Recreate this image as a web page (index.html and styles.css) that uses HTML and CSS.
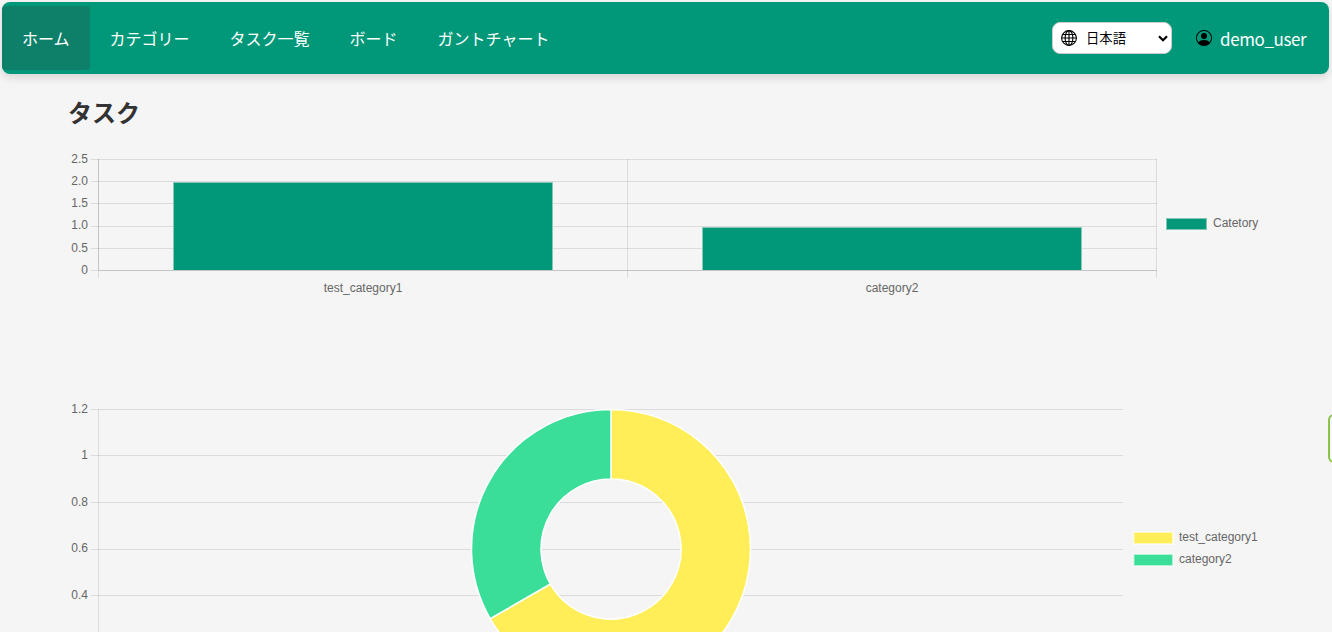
FILE: index.html
```html
<!DOCTYPE html>
<html lang="ja">
<head>
<meta charset="utf-8">
<title>タスク</title>
<link rel="stylesheet" href="styles.css">
</head>
<body>
<header class="navbar">
  <nav class="menu">
    <a class="menu-link active">ホーム</a>
    <a class="menu-link">カテゴリー</a>
    <a class="menu-link">タスク一覧</a>
    <a class="menu-link">ボード</a>
    <a class="menu-link">ガントチャート</a>
  </nav>
  <div class="tools">
    <div class="language">
      <svg class="icon" viewBox="0 0 16 16" fill="none" stroke="#000" stroke-width="1.1"><circle cx="8" cy="8" r="7.4"/><ellipse cx="8" cy="8" rx="3.9" ry="7.4"/><path d="M8 .5v15M.5 8h15M1.6 4.5h12.8M1.6 11.5h12.8"/></svg>
      <span class="language-name">日本語</span>
      <svg class="chevron" viewBox="0 0 10 7" fill="none" stroke="#000" stroke-width="2.2"><path d="M1 1.2l4 4 4-4"/></svg>
    </div>
    <div class="user">
      <svg class="icon" viewBox="0 0 16 16"><path d="M11 6a3 3 0 1 1-6 0 3 3 0 0 1 6 0"/><path fill-rule="evenodd" d="M0 8a8 8 0 1 1 16 0A8 8 0 0 1 0 8m8-7a7 7 0 0 0-5.468 11.37C3.242 11.226 4.805 10 8 10s4.757 1.225 5.468 2.37A7 7 0 0 0 8 1"/></svg>
      <span class="user-name">demo_user</span>
    </div>
  </div>
</header>
<main class="content">
  <h1 class="title">タスク</h1>
  <svg class="chart bar-chart" viewBox="66 150 1200 150">
    <path class="grid" d="M91 159.5H1157M91 181.5H1157M91 203.5H1157M91 226.5H1157M91 248.5H1157M91 270.5H98M627.5 159V278M1156.5 159V278M98.5 271V278"/>
    <path class="axis" d="M98.5 159V270M98 270.5H1157"/>
    <path class="bar" d="M173.5 270V182.5H552.5V270M702.5 270V227.5H1081.5V270"/>
    <g class="end">
      <text x="88" y="163">2.5</text><text x="88" y="185">2.0</text><text x="88" y="207">1.5</text><text x="88" y="229">1.0</text><text x="88" y="252">0.5</text><text x="88" y="274">0</text>
    </g>
    <g class="middle"><text x="363" y="292">test_category1</text><text x="892" y="292">category2</text></g>
    <rect class="bar" x="1166.5" y="218.5" width="40" height="11"/>
    <text x="1213" y="227">Catetory</text>
  </svg>
  <svg class="chart ring-chart" viewBox="66 400 1200 232">
    <path class="grid" d="M91 409.5H1123M91 455.5H1123M91 502.5H1123M91 549.5H1123M91 595.5H1123M98.5 409V632"/>
    <g class="end">
      <text x="88" y="413">1.2</text><text x="88" y="459">1</text><text x="88" y="506">0.8</text><text x="88" y="552">0.6</text><text x="88" y="599">0.4</text>
    </g>
    <g class="ring">
      <path class="yellow" d="M611 409.5A139.5 139.5 0 1 1 490.2 618.75L550.4 584A70 70 0 1 0 611 479Z"/>
      <path class="green" d="M490.2 618.75A139.5 139.5 0 0 1 611 409.5V479A70 70 0 0 0 550.4 584Z"/>
    </g>
    <rect class="key yellow" x="1133.5" y="532" width="39.5" height="12"/>
    <text x="1179" y="541">test_category1</text>
    <rect class="key green" x="1133.5" y="554" width="39.5" height="12"/>
    <text x="1179" y="563">category2</text>
  </svg>
</main>
<div class="side-tab"></div>
</body>
</html>
```
FILE: styles.css
```css
* { box-sizing: border-box; }
body {
  margin: 0;
  height: 632px;
  overflow: hidden;
  background: #f5f5f5;
  font-family: "Noto Sans CJK JP", sans-serif;
}
.navbar {
  display: flex;
  justify-content: space-between;
  align-items: center;
  height: 72px;
  margin: 2px 3px 0 2px;
  padding-right: 23px;
  border-radius: 8px;
  background: #009879;
  color: #fff;
  box-shadow: 0 4px 8px rgba(0, 0, 0, .12);
}
.menu { display: flex; }
.menu-link {
  height: 64px;
  padding: 0 20px;
  border-radius: 4px;
  font-size: 16px;
  line-height: 65px;
}
.active { background: #0e7f68; }
.tools, .user, .language { display: flex; align-items: center; }
.tools { gap: 24px; }
.language {
  width: 120px;
  height: 32px;
  padding: 0 3px 0 8px;
  border: 1px solid #ccc;
  border-radius: 8px;
  background: #fff;
  color: #000;
  font-size: 13.33px;
}
.language-name { margin-left: 9px; line-height: 18px; padding-bottom: 1px; }
.icon { width: 16px; height: 16px; }
.chevron { width: 10px; height: 7px; margin-left: auto; }
.user { gap: 8px; }
.user-name {
  width: 86px;
  padding-top: 2px;
  font-size: 17px;
  line-height: 26px;
  letter-spacing: -.4px;
  white-space: nowrap;
}
.content { padding: 0 66px; }
.title {
  margin: 20px 0 0 2px;
  height: 56px;
  color: #333;
  font-size: 24px;
  line-height: 36px;
}
.chart {
  display: block;
  width: 1200px;
  fill: #666;
  font: 12px "Liberation Sans", Arial, sans-serif;
}
.bar-chart { height: 150px; margin-bottom: 100px; }
.ring-chart { height: 232px; }
.grid { fill: none; stroke: rgba(0, 0, 0, .1); }
.axis { fill: none; stroke: rgba(0, 0, 0, .2); }
.bar { fill: #009879; stroke: #86c7b8; }
.end { text-anchor: end; }
.middle { text-anchor: middle; }
.ring { stroke: #fff; stroke-width: 1.5; }
.yellow { fill: #ffee58; }
.green { fill: #3bde99; }
.key { stroke: #fff; stroke-opacity: .6; stroke-width: 2; }
.side-tab {
  position: absolute;
  left: 1328px;
  top: 414px;
  width: 60px;
  height: 49px;
  border: 2px solid #8bc34a;
  border-radius: 6px;
}
```
